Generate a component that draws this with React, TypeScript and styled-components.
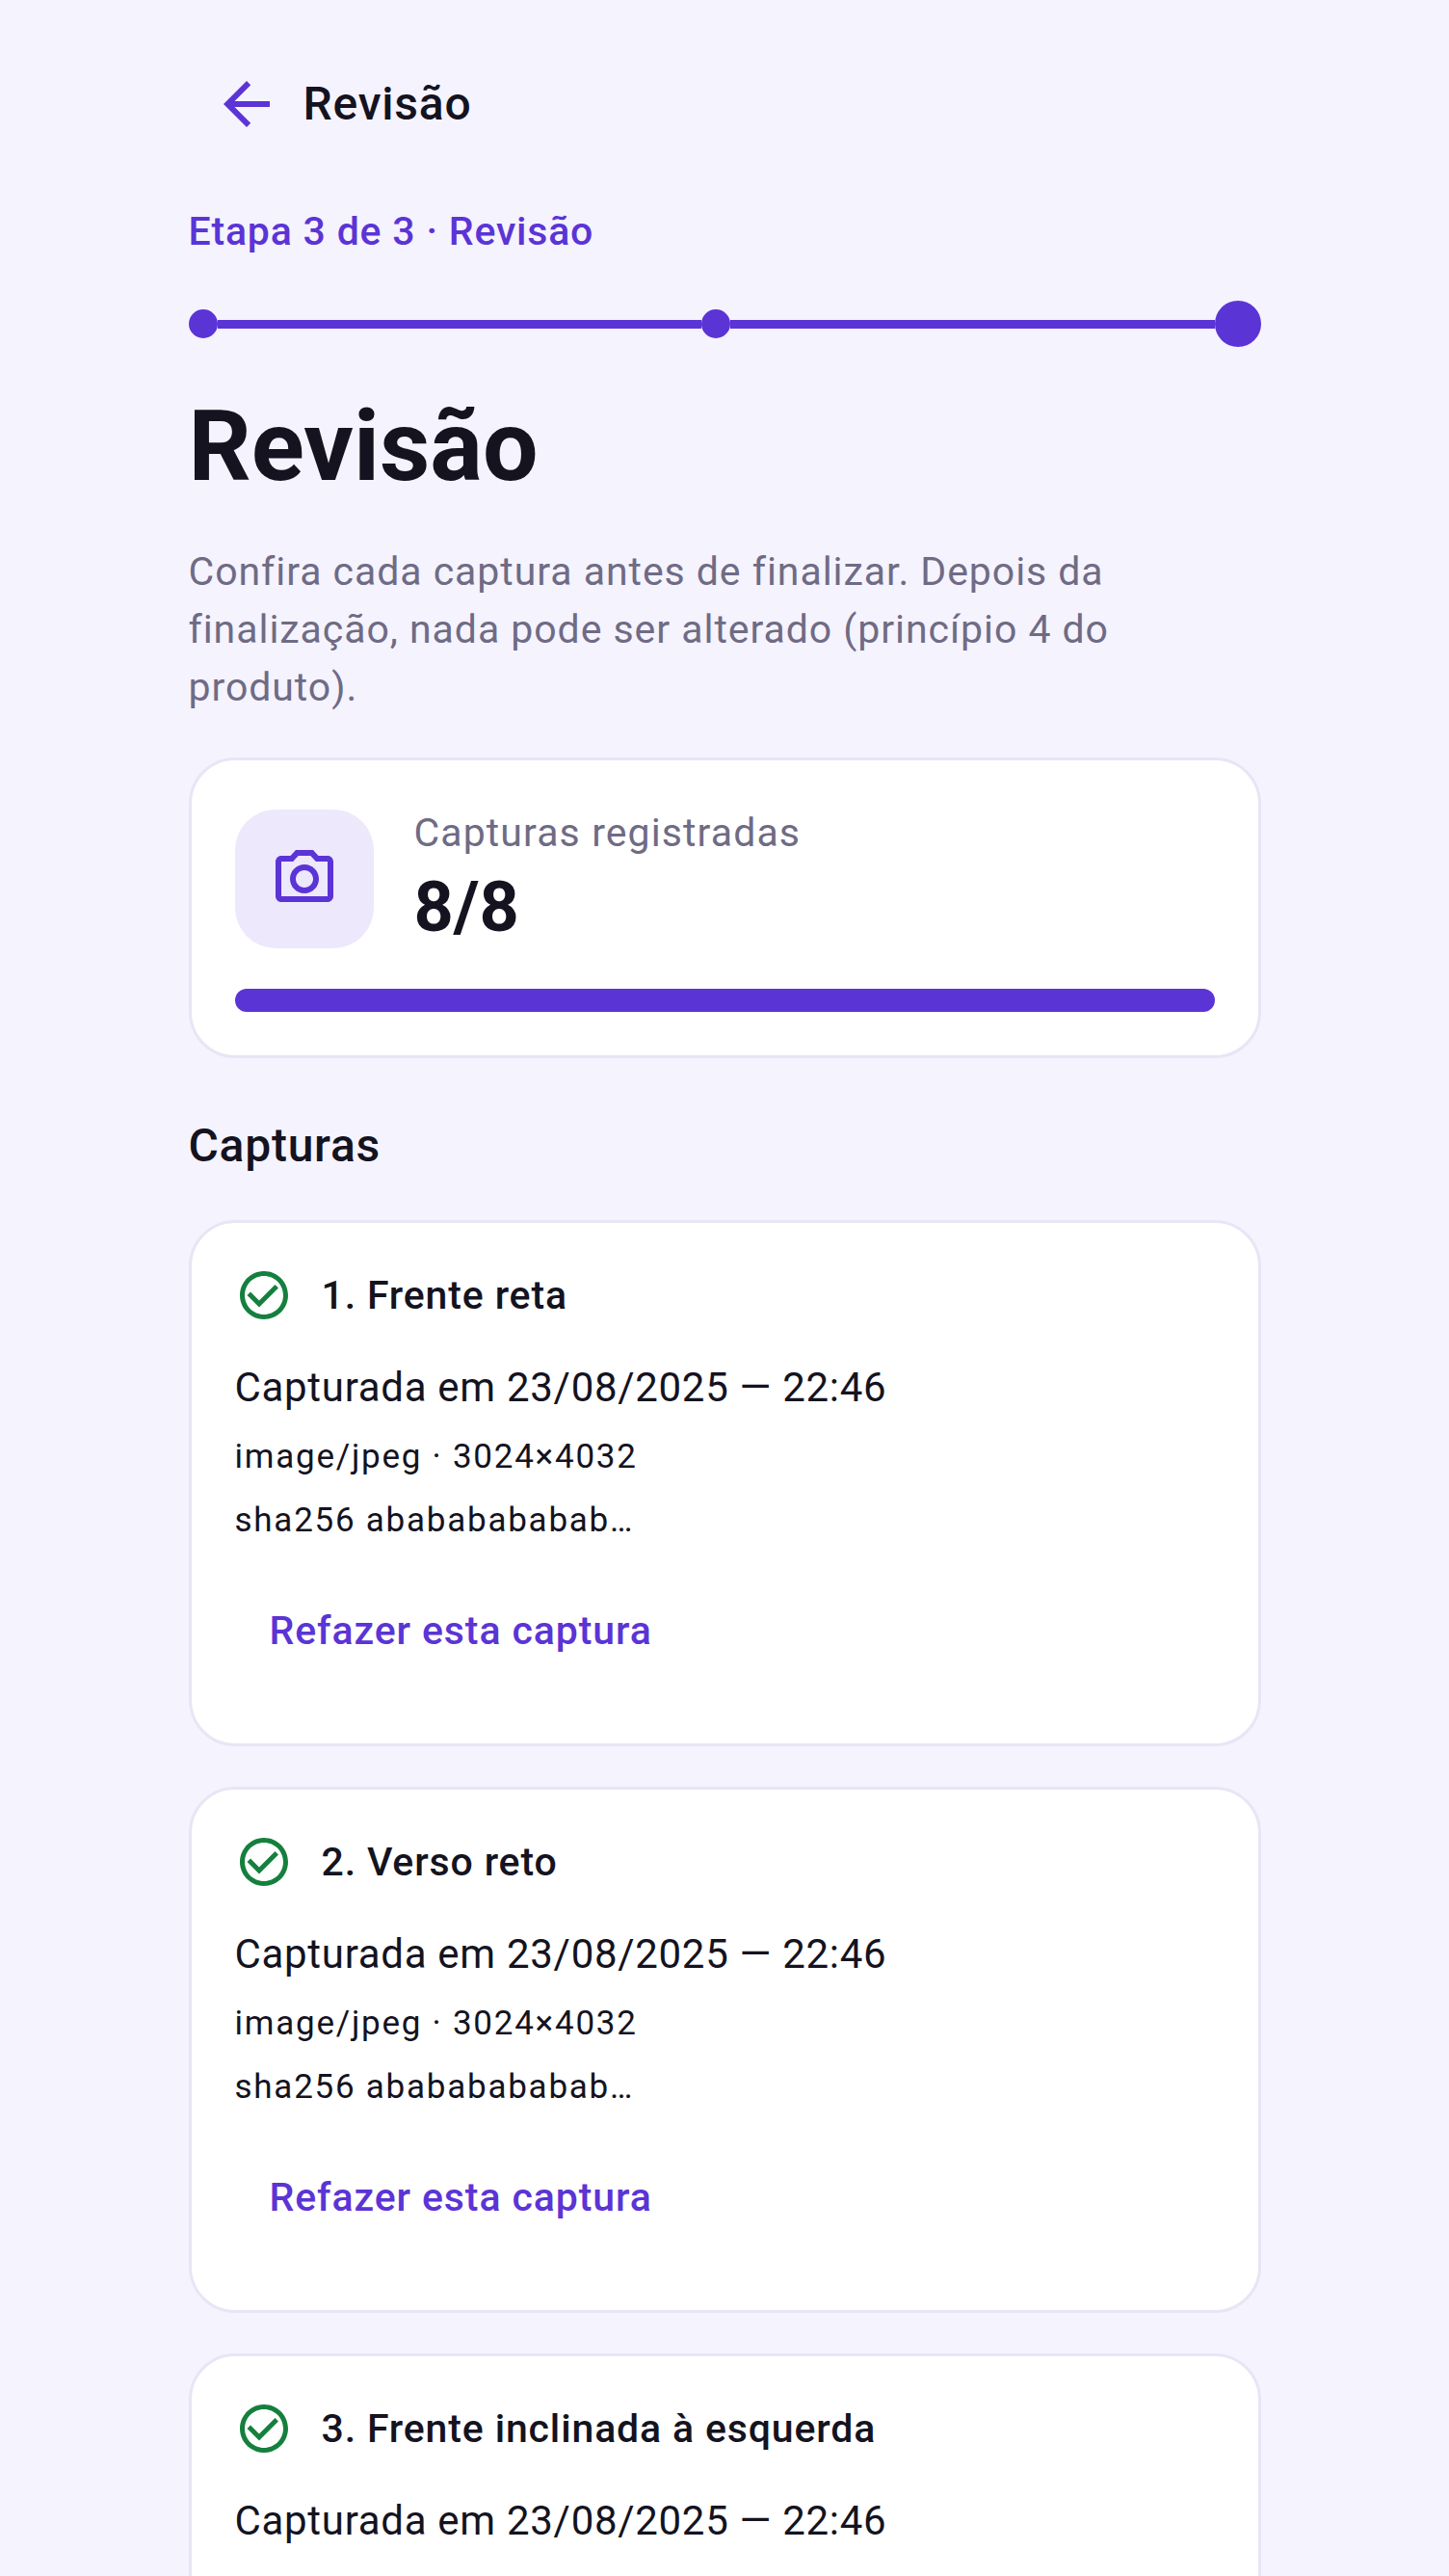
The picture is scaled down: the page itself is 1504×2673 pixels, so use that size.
import React from "react";
import styled, { createGlobalStyle } from "styled-components";

const color = {
  primary: "#5B34D6",
  ink: "#14131F",
  muted: "#6F6B85",
  border: "#E8E5F5",
  tint: "#EDE8FC",
  success: "#15803D",
};

const GlobalStyle = createGlobalStyle`
  html, body {
    margin: 0;
    padding: 0;
    height: 100%;
    overflow: hidden;
    background: #F5F3FE;
  }
  * { box-sizing: border-box; }
`;

const Page = styled.main`
  width: 1113px;
  height: 100vh;
  margin: 0 auto;
  padding-top: 84px;
  overflow: hidden;
  font-family: Roboto, "Noto Sans", sans-serif;
  color: ${color.ink};
`;

const TopBar = styled.header`
  display: flex;
  align-items: center;
  gap: 35px;
  height: 48px;
  padding-left: 36px;
  font-size: 48px;
  font-weight: 500;
  line-height: 48px;
  letter-spacing: 0.8px;
`;

const BackIcon = styled.svg`
  width: 72px;
  height: 72px;
  margin: 0 -12px;
  fill: ${color.primary};
  flex: none;
`;

const StepLabel = styled.div`
  margin-top: 84px;
  font-size: 41px;
  font-weight: 500;
  line-height: 48px;
  letter-spacing: 0.8px;
  color: ${color.primary};
`;

const Stepper = styled.div`
  display: flex;
  align-items: center;
  height: 48px;
  margin-top: 48px;
`;

const StepDot = styled.span<{ $current?: boolean }>`
  flex: none;
  width: ${(p) => (p.$current ? 48 : 30)}px;
  height: ${(p) => (p.$current ? 48 : 30)}px;
  border-radius: 50%;
  background: ${color.primary};
`;

const StepLine = styled.span`
  flex: 1;
  height: 9px;
  background: ${color.primary};
`;

const Title = styled.h1`
  margin: 43px 0 0;
  font-size: 102px;
  font-weight: 700;
  line-height: 120px;
`;

const Intro = styled.p`
  margin: 40px 0 0;
  font-size: 41px;
  line-height: 60px;
  letter-spacing: 0.95px;
  color: ${color.muted};
`;

const Card = styled.section`
  background: #fff;
  border: 3px solid ${color.border};
  border-radius: 48px;
`;

const SummaryCard = styled(Card)`
  margin-top: 43px;
  padding: 48px 45px 45px;
`;

const SummaryRow = styled.div`
  display: flex;
  align-items: center;
  gap: 42px;
`;

const IconBox = styled.div`
  display: flex;
  align-items: center;
  justify-content: center;
  width: 144px;
  height: 144px;
  border-radius: 42px;
  background: ${color.tint};
  color: ${color.primary};
`;

const SummaryText = styled.div`
  display: flex;
  flex-direction: column;
  gap: 9px;
  padding-bottom: 3px;
`;

const SummaryLabel = styled.div`
  font-size: 41px;
  line-height: 54px;
  letter-spacing: 1.1px;
  color: ${color.muted};
`;

const SummaryValue = styled.div`
  font-size: 72px;
  font-weight: 700;
  line-height: 84px;
`;

const ProgressTrack = styled.div`
  height: 24px;
  margin-top: 39px;
  border-radius: 12px;
  overflow: hidden;
  background: ${color.tint};
`;

const ProgressFill = styled.div`
  height: 100%;
  background: ${color.primary};
`;

const SectionTitle = styled.h2`
  margin: 67px 0 0;
  font-size: 48px;
  font-weight: 500;
  line-height: 48px;
  letter-spacing: 0.75px;
`;

const CaptureList = styled.div`
  display: flex;
  flex-direction: column;
  gap: 42px;
  margin-top: 53px;
`;

const CaptureCard = styled(Card)`
  min-height: 546px;
  padding: 45px 45px 0;
`;

const CaptureHead = styled.div`
  display: flex;
  align-items: center;
  gap: 34px;
  height: 60px;
  font-size: 41px;
  font-weight: 500;
  letter-spacing: 0.85px;
`;

const CheckIcon = styled.svg`
  width: 60px;
  height: 60px;
  margin-right: -4px;
  fill: ${color.success};
  flex: none;
`;

const CapturedAt = styled.div`
  margin-top: 39px;
  font-size: 42px;
  line-height: 54px;
  letter-spacing: 0.7px;
`;

const Meta = styled.div`
  margin-top: 18px;
  font-size: 35px;
  line-height: 48px;
  letter-spacing: 1.75px;

  ${CapturedAt} + & {
    margin-top: 21px;
  }
`;

const RedoButton = styled.button`
  display: block;
  margin-top: 48px;
  padding: 0 36px;
  height: 84px;
  border: 0;
  background: none;
  font: 500 41px Roboto, sans-serif;
  letter-spacing: 0.9px;
  color: ${color.primary};
`;

// the third card runs past the bottom of the frame, so only its top part is filled in
const captures = [
  { name: "1. Frente reta", full: true },
  { name: "2. Verso reto", full: true },
  { name: "3. Frente inclinada à esquerda", full: false },
];

export default function App() {
  return (
    <>
      <GlobalStyle />
      <Page>
        <TopBar>
          <BackIcon viewBox="0 0 24 24">
            <path d="M20 11H7.83l5.59-5.59L12 4l-8 8 8 8 1.41-1.41L7.83 13H20v-2z" />
          </BackIcon>
          Revisão
        </TopBar>
        <StepLabel>Etapa 3 de 3 · Revisão</StepLabel>
        <Stepper>
          <StepDot />
          <StepLine />
          <StepDot />
          <StepLine />
          <StepDot $current />
        </Stepper>
        <Title>Revisão</Title>
        <Intro>
          Confira cada captura antes de finalizar. Depois da finalização, nada pode ser alterado
          (princípio 4 do produto).
        </Intro>
        <SummaryCard>
          <SummaryRow>
            <IconBox>
              <svg width="72" height="72" viewBox="0 0 24 24" fill="currentColor">
                <path d="M20 4h-3.17L15 2H9L7.17 4H4c-1.1 0-2 .9-2 2v12c0 1.1.9 2 2 2h16c1.1 0 2-.9 2-2V6c0-1.1-.9-2-2-2zm0 14H4V6h4.05l1.83-2h4.24l1.83 2H20v12zM12 7c-2.76 0-5 2.24-5 5s2.24 5 5 5 5-2.24 5-5-2.24-5-5-5zm0 8c-1.65 0-3-1.35-3-3s1.35-3 3-3 3 1.35 3 3-1.35 3-3 3z" />
              </svg>
            </IconBox>
            <SummaryText>
              <SummaryLabel>Capturas registradas</SummaryLabel>
              <SummaryValue>8/8</SummaryValue>
            </SummaryText>
          </SummaryRow>
          <ProgressTrack>
            <ProgressFill />
          </ProgressTrack>
        </SummaryCard>
        <SectionTitle>Capturas</SectionTitle>
        <CaptureList>
          {captures.map(({ name, full }) => (
            <CaptureCard key={name}>
              <CaptureHead>
                <CheckIcon viewBox="0 0 24 24">
                  <path d="M16.59 7.58L10 14.17l-3.59-3.58L5 12l5 5 8-8zM12 2C6.48 2 2 6.48 2 12s4.48 10 10 10 10-4.48 10-10S17.52 2 12 2zm0 18c-4.42 0-8-3.58-8-8s3.58-8 8-8 8 3.58 8 8-3.58 8-8 8z" />
                </CheckIcon>
                {name}
              </CaptureHead>
              <CapturedAt>Capturada em 23/08/2025 — 22:46</CapturedAt>
              {full && (
                <>
                  <Meta>image/jpeg · 3024×4032</Meta>
                  <Meta>sha256 abababababab…</Meta>
                  <RedoButton>Refazer esta captura</RedoButton>
                </>
              )}
            </CaptureCard>
          ))}
        </CaptureList>
      </Page>
    </>
  );
}
